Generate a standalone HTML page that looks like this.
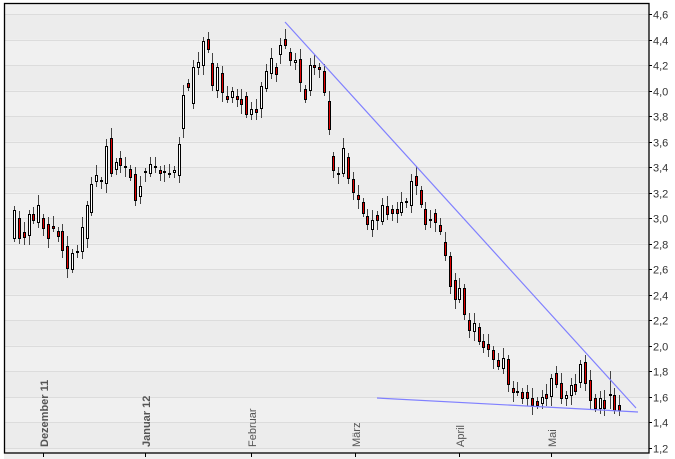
<!DOCTYPE html>
<html><head><meta charset="utf-8"><style>
html,body{margin:0;padding:0;background:#fff;width:675px;height:459px;overflow:hidden}
svg{display:block;font-family:"Liberation Sans",sans-serif}
</style></head><body>
<svg id="c" width="675" height="459" xmlns="http://www.w3.org/2000/svg"></svg>
<script>
var s='';
function Y(p){return 14+(4.6-p)*127.65;}
for(var i=0;i<18;i++){var p=4.6-i*0.2;var y1=Y(p),y2=Y(p-0.2);
 s+='<rect x="4" y="'+y1+'" width="645" height="'+(y2-y1)+'" fill="'+(i%2?'#f0f0f0':'#ececec')+'"/>';}
s+='<rect x="4" y="3" width="645" height="11" fill="#f0f0f0"/>';
for(var i=0;i<18;i++){var p=4.6-i*0.2;var y=Math.round(Y(p))+.5;
 s+='<line x1="4" x2="649" y1="'+y+'" y2="'+y+'" stroke="#dcdcdc"/>';
 s+='<line x1="649" x2="652" y1="'+y+'" y2="'+y+'" stroke="#000"/>';
 s+='<text x="653" y="'+(y+4)+'" font-size="11" fill="#333">'+p.toFixed(1).replace('.',',')+'</text>';}
s+='<rect x="4.5" y="3.5" width="644.5" height="449.5" fill="none" stroke="#000" stroke-width="1.3"/>';
var m=[[44,'Dezember 11',1],[146,'Januar 12',1],[252,'Februar',0],[356,'März',0],[460,'April',0],[552,'Mai',0]];
m.forEach(function(a){s+='<line x1="'+(a[0]-0.5)+'" x2="'+(a[0]-0.5)+'" y1="453" y2="457" stroke="#000"/>';
 s+='<text transform="translate('+(a[0]+4)+',447) rotate(-90)" font-size="11" fill="#555"'+(a[2]?' font-weight="bold"':'')+'>'+a[1]+'</text>';});
// x, type(w/r/d), top, bottom
var d=[[14,'w',210,238],[19,'r',218,238],[24,'r',232,237],[29,'w',214,235],[33,'r',214,220],[38,'w',205,222],[43,'r',218,228],[48,'r',224,238],[53,'r',226,228],[58,'r',231,236],[62,'r',231,250],[67,'r',246,268],[72,'w',253,269],[77,'d',252,252],[82,'w',227,251],[87,'w',205,238],[91,'w',184,212],[96,'w',175,181],[101,'d',181,181],[106,'w',146,183],[111,'r',138,173],[116,'w',162,169],[120,'r',158,165],[125,'d',167,167],[130,'r',169,177],[135,'r',174,200],[140,'w',186,196],[145,'d',172,172],[150,'w',164,173],[155,'d',167,167],[160,'r',170,173],[164,'d',172,172],[169,'d',174,174],[174,'w',170,172],[179,'w',144,175],
[183,'w',95,128],[188,'r',83,87],[193,'w',67,103],[198,'w',62,67],[203,'w',41,65],[208,'r',39,49],[212,'r',63,85],[217,'w',67,90],[222,'r',73,92],[227,'r',96,99],[232,'w',91,97],[237,'r',96,99],[241,'r',99,104],[246,'r',96,114],[251,'w',109,114],[256,'r',109,112],[261,'w',86,108],[266,'w',71,88],[271,'w',58,73],[276,'r',67,74],[280,'w',45,54],[285,'r',39,45],[290,'r',52,60],[295,'w',60,62],[300,'r',59,82],[305,'r',89,99],[310,'w',65,90],[314,'r',65,67],[319,'r',67,68],[324,'r',71,92],[329,'r',101,129],[333,'r',156,170],[338,'d',174,174],[343,'w',148,173],[348,'r',157,178],[353,'r',179,192],[358,'r',195,199],[363,'r',202,213],[367,'r',216,224],[372,'w',220,229],[377,'r',215,220],[382,'w',205,221],[387,'r',206,214],[392,'r',209,213],[397,'r',209,213],[401,'w',202,212],[406,'d',202,202],[411,'w',181,205],[416,'r',176,185],[421,'r',190,204],[425,'r',209,224],[430,'d',220,220],[435,'r',213,222],[440,'r',225,231],[445,'r',242,255],[450,'r',256,286],[455,'r',280,299],[459,'w',288,299],[464,'r',288,314],[469,'r',320,330],[474,'w',323,331],[479,'r',327,341],[483,'r',341,347],[488,'r',344,349],[493,'r',350,359],[498,'r',360,366],[503,'w',358,368],[508,'r',359,384],[513,'r',388,392],[517,'d',392,392],[522,'r',392,398],[527,'r',392,398],[532,'r',398,405],[537,'r',401,405],[542,'w',397,403],[546,'r',394,398],[551,'w',378,396],[556,'r',373,384],[561,'r',383,398],[566,'w',395,398],[571,'w',385,395],[575,'r',384,391],[580,'w',364,382],[585,'r',362,383],[590,'r',380,400],[595,'r',398,408],[600,'w',398,408],[604,'r',400,408],[610,'d',395,395],[614,'r',395,410],[619,'r',405,410]];
d.forEach(function(c,i){var x=c[0],t=c[2],b=c[3];var hi=t-4-(i%3)*3,lo=b+4+(i%4)*2;
 if(x==610){hi=371;lo=409;}
 s+='<line x1="'+(x+.5)+'" x2="'+(x+.5)+'" y1="'+hi+'" y2="'+lo+'" stroke="#444"/>';
 if(c[1]=='d'){s+='<rect x="'+(x-1)+'" y="'+(t-1)+'" width="3" height="2" fill="#000"/>';}
 else{if(b-t<2)b=t+2;s+='<rect x="'+(x-0.5)+'" y="'+(t+.5)+'" width="2" height="'+(b-t)+'" fill="'+(c[1]=='r'?'#e00000':'#fff')+'" stroke="#000"/>';}
});
s+='<line x1="285" y1="22" x2="636" y2="408" stroke="#8080ff" stroke-width="1.2"/>';
s+='<line x1="377" y1="398" x2="638" y2="412" stroke="#8080ff" stroke-width="1.2"/>';
document.getElementById('c').innerHTML=s;
</script>
</body></html>
